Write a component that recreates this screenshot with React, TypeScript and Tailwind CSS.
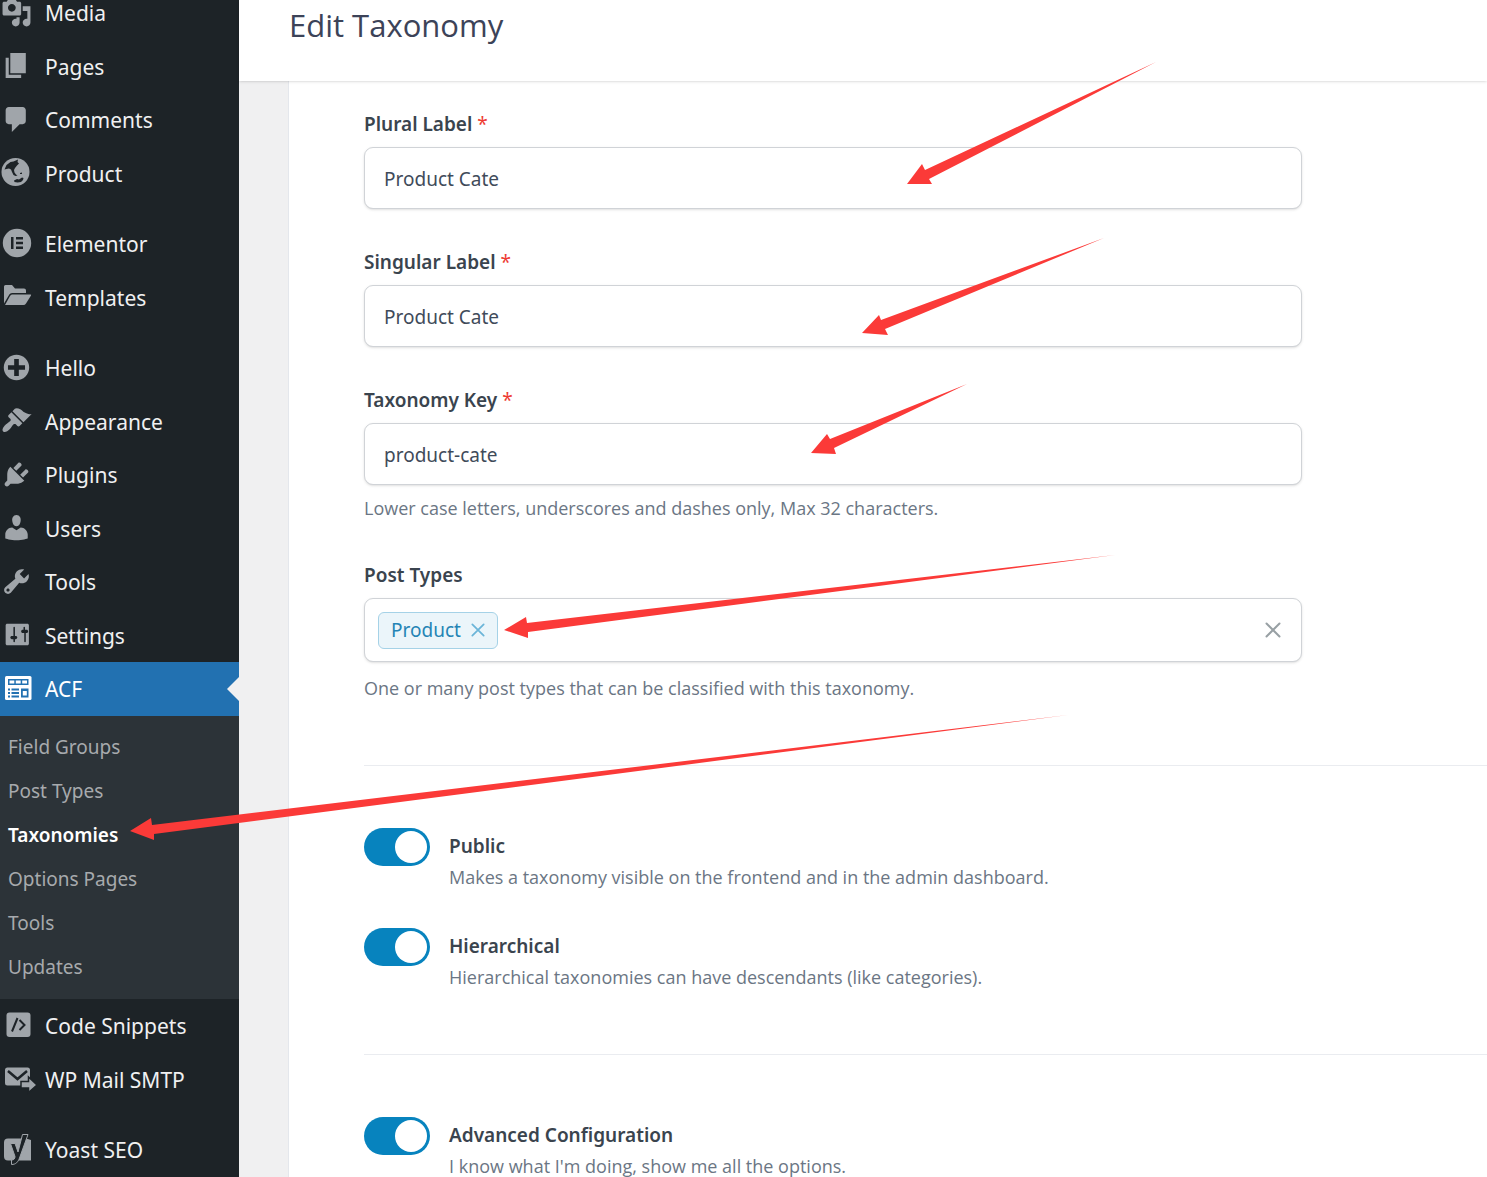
import { useState } from 'react'
import type { ReactNode } from 'react'

type MenuItem = { label: string; icon: ReactNode }

function Dashicon({ d }: { d: string }) {
  return (
    <svg viewBox="0 0 20 20" className="size-[31px]" fill="currentColor" aria-hidden="true">
      <path fillRule="evenodd" d={d} />
    </svg>
  )
}

function GlobeIcon() {
  return (
    <svg viewBox="0 0 31 31" className="size-[31px]" aria-hidden="true">
      <circle cx="14.5" cy="15" r="14" fill="currentColor" />
      <path
        fill="#1d2327"
        d="M3.500 12.500l2-4.500 4-3 3-.5 4.500-2-.5 2.500 1.500 1.500-2 2-2 2.500-1 2 .5 2.500 1.500 2 1.500 1-2 .5-2-1-1.500-3-1-2.500-2-1-2.500.5zM13 23.500l3-1.500 2 .5 3-2 1.500.5-.5 2-2 2-3.500.5-3-.5zM19 16l2-.5v1.500h-2z"
      />
    </svg>
  )
}

function ElementorIcon() {
  return (
    <svg viewBox="0 0 31 31" className="size-[31px]" aria-hidden="true">
      <circle cx="16" cy="15" r="14.200" fill="currentColor" />
      <path fill="#1d2327" d="M10 9h2.500v12H10zM15 9h7v2.400h-7zM15 13.800h7v2.400h-7zM15 18.600h7V21h-7z" />
    </svg>
  )
}

function FolderIcon() {
  return (
    <svg viewBox="0 0 31 31" className="size-[31px]" fill="currentColor" aria-hidden="true">
      <path d="M3 5.500Q3 4 4.500 4H11l3 3.500h9q2 0 2 2V12H11q-1.800 0-2.700 1.600L3 22.500z" />
      <path d="M11 13.500h18.500q1 0 .5 1l-5 8q-1 1.500-2.500 1.500H4l5-9q.8-1.500 2-1.500z" />
    </svg>
  )
}

function AcfIcon() {
  return (
    <svg viewBox="0 0 31 31" className="size-[31px]" aria-hidden="true">
      <rect x="4" y="3" width="26.500" height="24" rx="1.500" fill="currentColor" />
      <path
        fill="#2271b1"
        d="M7 6h20.500v6H7zM7 15.500h2v2H7zM10.500 15.500H18v2h-7.500zM7 19h2v2H7zM10.500 19H18v2h-7.500zM7 22.500h2v2H7zM10.500 22.500H18v2h-7.500zM20 15.500h7.500v9H20z"
      />
      <path fill="currentColor" d="M8.500 7.500h4.800v3H8.500zM14.800 7.500h4.900v3h-4.900zM21.200 7.500H26v3h-4.800zM21.800 18h4v4.500h-4z" />
    </svg>
  )
}

function SnippetsIcon() {
  return (
    <svg viewBox="0 0 31 31" className="size-[31px]" fill="none" aria-hidden="true">
      <rect x="5.500" y="2.500" width="24" height="24.500" rx="3" fill="currentColor" />
      <path stroke="#1d2327" strokeWidth="2" d="M16.500 8l-5.500 13.500M18.500 10l5 5-5 5" />
    </svg>
  )
}

function MailIcon() {
  return (
    <svg viewBox="0 0 31 31" className="size-[31px] overflow-visible" fill="none" aria-hidden="true">
      <rect x="4" y="4.500" width="25" height="18" rx="2.500" fill="currentColor" />
      <path stroke="#1d2327" strokeWidth="2.500" d="M7 8l9.500 8L26 8" />
      <path
        fill="currentColor"
        stroke="#1d2327"
        strokeWidth="1.500"
        d="M20 18.500h7.500V14l8.500 8-8.500 7.500v-4.500H20z"
      />
    </svg>
  )
}

function YoastIcon() {
  return (
    <svg viewBox="0 0 31 31" className="size-[31px] overflow-visible" fill="none" aria-hidden="true">
      <path fill="currentColor" d="M7 4.500h18l5 1.500V26.500H7a4 4 0 0 1-4-4v-14a4 4 0 0 1 4-4z" />
      <path
        fill="#1d2327"
        stroke="currentColor"
        strokeWidth="1"
        d="M21.500.5H27L18.500 24c-1.500 4-3.500 6.500-8 6.500V26c2.500 0 3.500-1.200 3.500-3.500L9.500 9.500H14l3 8.500z"
      />
    </svg>
  )
}

const MENU: MenuItem[][] = [
  [
    {
      label: 'Media',
      icon: (
        <Dashicon d="M13 11V4c0-.55-.45-1-1-1h-1.670L9 1H5L3.670 3H2c-.55 0-1 .45-1 1v7c0 .55.45 1 1 1h10c.55 0 1-.45 1-1zM7 4.500c1.380 0 2.500 1.120 2.500 2.500S8.380 9.500 7 9.500 4.500 8.380 4.500 7 5.620 4.500 7 4.500zM14 6h5v10.500c0 1.380-1.120 2.500-2.500 2.500S14 17.880 14 16.500s1.120-2.500 2.500-2.500c.17 0 .34.02.5.05V9h-3V6zm-4 8.050V13h2v3.500c0 1.380-1.120 2.500-2.500 2.500S7 17.880 7 16.500 8.120 14 9.500 14c.17 0 .34.02.5.05z" />
      ),
    },
    { label: 'Pages', icon: <Dashicon d="M6 15V2h10v13H6zm-1 1h8v2H3V5h2v11z" /> },
    {
      label: 'Comments',
      icon: <Dashicon d="M5 2h9c1.100 0 2 .9 2 2v7c0 1.100-.9 2-2 2h-2l-5 5v-5H5c-1.100 0-2-.9-2-2V4c0-1.100.9-2 2-2z" />,
    },
    { label: 'Product', icon: <GlobeIcon /> },
  ],
  [
    { label: 'Elementor', icon: <ElementorIcon /> },
    { label: 'Templates', icon: <FolderIcon /> },
  ],
  [
    {
      label: 'Hello',
      icon: (
        <Dashicon d="M15.800 4.200c3.200 3.210 3.200 8.390 0 11.600-3.210 3.200-8.390 3.200-11.600 0C1 12.590 1 7.410 4.200 4.200 7.410 1 12.590 1 15.800 4.200zm-4.300 11.300v-4h4v-3h-4v-4h-3v4h-4v3h4v4h3z" />
      ),
    },
    {
      label: 'Appearance',
      icon: (
        <Dashicon d="M14.480 11.060L7.410 3.990l1.500-1.500c.5-.56 2.300-.47 3.510.32 1.210.8 1.430 1.280 2.910 2.100 1.180.64 2.450 1.260 4.450.85zm-.71.71L6.700 4.700 4.930 6.470c-.39.39-.39 1.020 0 1.410l1.060 1.060c.39.39.39 1.030 0 1.420-.6.6-1.430 1.110-2.210 1.690-.35.26-.7.53-1.010.84C1.430 14.230.4 16.080 1.400 17.070c.99 1 2.840-.03 4.180-1.360.31-.31.58-.66.85-1.020.57-.78 1.080-1.610 1.690-2.210.39-.39 1.020-.39 1.410 0l1.060 1.060c.39.39 1.020.39 1.410 0z" />
      ),
    },
    {
      label: 'Plugins',
      icon: (
        <Dashicon d="M13.110 4.360L9.870 7.600 8 5.730l3.240-3.240c.35-.34 1.050-.2 1.560.32.52.51.66 1.210.31 1.550zm-8 1.770l.91-1.120 9.010 9.010-1.190.84c-.71.71-2.630 1.160-3.820 1.160H6.140L4.900 17.260c-.59.59-1.540.59-2.120 0-.59-.58-.59-1.530 0-2.120l1.240-1.240v-3.880c0-1.130.4-3.190 1.090-3.890zm7.260 3.970l3.240-3.240c.34-.35 1.040-.21 1.550.31.52.51.66 1.210.31 1.550l-3.240 3.250z" />
      ),
    },
    {
      label: 'Users',
      icon: (
        <Dashicon d="M10 9.250c-2.270 0-2.730-3.440-2.730-3.440C7 4.020 7.820 2 9.970 2c2.160 0 2.980 2.020 2.710 3.810 0 0-.41 3.440-2.680 3.440zm0 2.570L12.720 10c2.390 0 4.520 2.330 4.520 4.530v2.490s-3.650 1.130-7.240 1.130c-3.650 0-7.240-1.130-7.240-1.130v-2.490c0-2.250 1.940-4.480 4.470-4.480z" />
      ),
    },
    {
      label: 'Tools',
      icon: (
        <Dashicon d="M16.680 9.770c-1.340 1.340-3.300 1.670-4.950.99l-5.410 6.520c-.99.99-2.590.99-3.580 0s-.99-2.590 0-3.570l6.520-5.420c-.68-1.650-.35-3.610.99-4.950 1.280-1.280 3.120-1.620 4.720-1.060l-2.890 2.890 2.820 2.820 2.860-2.870c.53 1.580.18 3.390-1.080 4.650zM3.810 16.210c.4.39 1.040.39 1.430 0 .4-.4.4-1.040 0-1.430-.39-.4-1.030-.4-1.430 0-.39.39-.39 1.030 0 1.430z" />
      ),
    },
    {
      label: 'Settings',
      icon: (
        <Dashicon d="M18 16V4c0-.55-.45-1-1-1H4c-.55 0-1 .45-1 1v12c0 .55.45 1 1 1h13c.55 0 1-.45 1-1zM8.500 11h1c.55 0 1 .45 1 1s-.45 1-1 1h-.5v1.500c0 .28-.22.5-.5.5s-.5-.22-.5-.5V13H7c-.55 0-1-.45-1-1s.45-1 1-1h1V5.500c0-.28.22-.5.5-.5s.5.22.5.5V11zm6.500-2h-1c-.55 0-1-.45-1-1s.45-1 1-1h.5V5.500c0-.28.22-.5.5-.5s.5.22.5.5V7h1c.55 0 1 .45 1 1s-.45 1-1 1h-.5v5.500c0 .28-.22.5-.5.5s-.5-.22-.5-.5V9z" />
      ),
    },
    { label: 'ACF', icon: <AcfIcon /> },
  ],
]

const SUBMENU = ['Field Groups', 'Post Types', 'Taxonomies', 'Options Pages', 'Tools', 'Updates']

const PLUGIN_MENU: MenuItem[][] = [
  [
    { label: 'Code Snippets', icon: <SnippetsIcon /> },
    { label: 'WP Mail SMTP', icon: <MailIcon /> },
  ],
  [{ label: 'Yoast SEO', icon: <YoastIcon /> }],
]

function MenuGroup({ items }: { items: MenuItem[] }) {
  return (
    <ul>
      {items.map((item) => {
        const active = item.label === 'ACF'
        return (
          <li key={item.label} className="odd:h-[54px] even:h-[53px]">
            <a
              href="#"
              className={`relative flex h-full items-center pl-px text-[21px] ${
                active ? 'bg-[#2271b1] text-white' : 'text-[#f0f0f1]'
              }`}
            >
              <span className={`flex w-11 shrink-0 items-center pb-0.5 ${active ? '' : 'text-[#a0a5aa]'}`}>
                {item.icon}
              </span>
              <span className="pt-0.5">{item.label}</span>
              {active && (
                <span className="absolute right-0 border-y-[12px] border-r-[12px] border-y-transparent border-r-[#f0f0f1]" />
              )}
            </a>
          </li>
        )
      })}
    </ul>
  )
}

function Sidebar() {
  return (
    <nav className="w-[239px] shrink-0 bg-[#1d2327]">
      <div className="-mt-3.5 flex flex-col gap-[17px]">
        {MENU.map((items) => (
          <MenuGroup key={items[0].label} items={items} />
        ))}
      </div>
      <ul className="bg-[#2c3338] pt-[9px] pb-2.5">
        {SUBMENU.map((label) => (
          <li key={label}>
            <a
              href="#"
              className={`block px-2 text-[19px] leading-[44px] ${
                label === 'Taxonomies' ? 'font-semibold text-white' : 'text-[#a7aaad]'
              }`}
            >
              {label}
            </a>
          </li>
        ))}
      </ul>
      <div className="flex flex-col gap-[17px]">
        {PLUGIN_MENU.map((items) => (
          <MenuGroup key={items[0].label} items={items} />
        ))}
      </div>
    </nav>
  )
}

function FieldLabel({ htmlFor, required, children }: { htmlFor: string; required?: boolean; children: ReactNode }) {
  return (
    <label htmlFor={htmlFor} className="mb-[11px] block font-semibold text-[#3a444e]">
      {children}
      {required && <span className="font-normal text-[#ee3b33]"> *</span>}
    </label>
  )
}

function HelpText({ children }: { children: ReactNode }) {
  return <p className="font-['Open_Sans',sans-serif] text-[18px] text-[#6b7684]">{children}</p>
}

function TextField({ id, label, value, help }: { id: string; label: string; value: string; help?: string }) {
  return (
    <div className="mb-[41px]">
      <FieldLabel htmlFor={id} required>
        {label}
      </FieldLabel>
      <input
        id={id}
        type="text"
        defaultValue={value}
        className="block h-[62px] w-full rounded-[9px] border border-[#d0d3d7] bg-white px-[19px] pt-0.5 text-[#3f4b5a] shadow-sm"
      />
      {help && (
        <div className="pt-[11px] pb-0.5">
          <HelpText>{help}</HelpText>
        </div>
      )}
    </div>
  )
}

function CloseIcon({ className }: { className: string }) {
  return (
    <svg viewBox="0 0 16 16" className={className} fill="none" stroke="currentColor" aria-hidden="true">
      <path strokeWidth="2" strokeLinecap="round" d="M1.500 1.500l13 13M14.500 1.500l-13 13" />
    </svg>
  )
}

function PostTypesField() {
  const [types, setTypes] = useState(['Product'])
  return (
    <div className="mb-[65px]">
      <FieldLabel htmlFor="post-types">Post Types</FieldLabel>
      <div className="mb-3.5 flex h-16 items-center rounded-[9px] border border-[#d0d3d7] bg-white pr-5 pl-[13px] shadow-sm">
        {types.map((type) => (
          <span
            key={type}
            className="flex h-[37px] items-center gap-2.5 rounded-md border border-[#a5d2e7] bg-[#ebf5fa] px-3 text-[#2584b5]"
          >
            {type}
            <button type="button" aria-label={`Remove ${type}`} onClick={() => setTypes(types.filter((t) => t !== type))}>
              <CloseIcon className="size-3.5 text-[#6bb5d8]" />
            </button>
          </span>
        ))}
        <input id="post-types" type="text" className="min-w-0 flex-1 outline-none" />
        <button type="button" aria-label="Clear all" onClick={() => setTypes([])}>
          <CloseIcon className="size-4 text-[#98a0a4]" />
        </button>
      </div>
      <HelpText>One or many post types that can be classified with this taxonomy.</HelpText>
    </div>
  )
}

function Toggle({ id, label, description }: { id: string; label: string; description: string }) {
  return (
    <div className="flex">
      <input
        id={id}
        type="checkbox"
        role="switch"
        defaultChecked
        className="relative h-[38px] w-[66px] shrink-0 appearance-none rounded-full bg-[#98a2b3] before:absolute before:top-[3px] before:left-[3px] before:size-8 before:rounded-full before:bg-white checked:bg-[#0783be] checked:before:left-[31px]"
      />
      <div className="flex flex-col gap-[7px] pt-1.5 pl-[19px]">
        <label htmlFor={id} className="font-semibold text-[#3a444e]">
          {label}
        </label>
        <HelpText>{description}</HelpText>
      </div>
    </div>
  )
}

// points: head tip, head corner, notch, tail, notch, head corner
const ARROWS = [
  '907,184 922,164 925,170 1156,62 929,179 932,184',
  '862,333 879,315 881,320 1104,238 885,329 888,335',
  '811,453 827,434 830,439 967,384 834,448 836,454',
  '504,630 526,617 527,623 1115,555 528,632 528,638',
  '130,831 151,818 152,825 1068,715 154,834 154,840',
]

function Arrows() {
  return (
    <svg className="pointer-events-none absolute inset-0 size-full" fill="#fb3a38" aria-hidden="true">
      {ARROWS.map((points) => (
        <polygon key={points} points={points} />
      ))}
    </svg>
  )
}

export default function App() {
  return (
    <div className="relative flex h-screen overflow-hidden bg-[#f0f0f1] font-['Noto_Sans',sans-serif]">
      <Sidebar />
      <div className="flex min-w-0 flex-1 flex-col">
        <header className="relative h-[81px] shrink-0 bg-white pt-1 pl-[50px] shadow">
          <h1 className="font-['Open_Sans',sans-serif] text-[31px] leading-[42px] text-[#3c4358]">Edit Taxonomy</h1>
        </header>
        <main className="ml-[49px] flex-1 overflow-hidden border-l border-[#e4e7ec] bg-white pt-[31px] pl-[75px] text-[19px] leading-6">
          <div className="max-w-[938px]">
            <TextField id="plural" label="Plural Label" value="Product Cate" />
            <TextField id="singular" label="Singular Label" value="Product Cate" />
            <TextField
              id="key"
              label="Taxonomy Key"
              value="product-cate"
              help="Lower case letters, underscores and dashes only, Max 32 characters."
            />
            <PostTypesField />
          </div>
          <div className="flex flex-col gap-[39px] border-t border-[#eaecf0] pt-[62px] pb-[65px]">
            <Toggle
              id="public"
              label="Public"
              description="Makes a taxonomy visible on the frontend and in the admin dashboard."
            />
            <Toggle
              id="hierarchical"
              label="Hierarchical"
              description="Hierarchical taxonomies can have descendants (like categories)."
            />
          </div>
          <div className="border-t border-[#eaecf0] pt-[62px]">
            <Toggle
              id="advanced"
              label="Advanced Configuration"
              description="I know what I'm doing, show me all the options."
            />
          </div>
        </main>
      </div>
      <Arrows />
    </div>
  )
}
